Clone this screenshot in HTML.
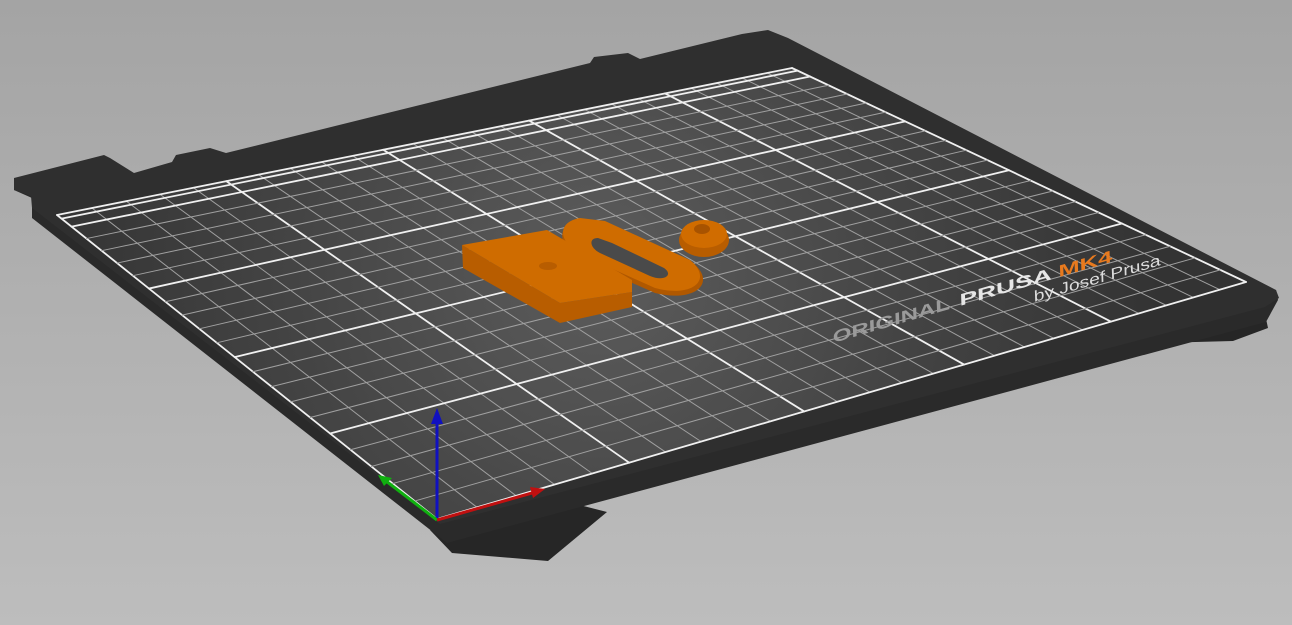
<!DOCTYPE html>
<html><head><meta charset="utf-8">
<style>
html,body{margin:0;padding:0;width:1292px;height:625px;overflow:hidden;}
body{background:linear-gradient(#a4a4a4,#bdbdbd);}
svg{display:block;}
</style></head><body>
<svg id="s" width="1292" height="625" viewBox="0 0 1292 625" xmlns="http://www.w3.org/2000/svg">
<defs>
<radialGradient id="glow" cx="600" cy="270" r="560" gradientUnits="userSpaceOnUse">
<stop offset="0" stop-color="#5c5c5c"/><stop offset="0.55" stop-color="#444"/><stop offset="1" stop-color="#333"/>
</radialGradient>
</defs>
<polygon points="430,530 452,553 548,561 607,512 560,500" fill="#262626"/>
<polygon points="1140,330 1158,343 1233,341 1268,328 1262,300" fill="#262626"/>
<polygon points="14,178 14,190 32,198 32,218 447,543 1266,322 1278,300 1276,290" fill="#2a2a2a"/>
<polygon points="14,178 104,155 110,158 134,173 172,162 176,155 210,148 226,153 590,63 594,57 628,53 640,59 742,34 768,30 788,38 1276,290 1279,298 1265,307 440,524 32,208 31,196 14,190" fill="#2f2f2f"/>
<polygon id="pa" points="437,519 1246,282 792,68 57,215" fill="url(#glow)"/>
<g id="grid" stroke-linecap="round"></g>
<g transform="matrix(0.96,-0.28,0.02,0.55,833,343)">
<text x="0" y="0" font-family="Liberation Sans, sans-serif" font-weight="bold" font-size="30" fill="#9a9a9a" textLength="122" lengthAdjust="spacingAndGlyphs">ORIGINAL</text>
<text x="132" y="0" font-family="Liberation Sans, sans-serif" font-weight="bold" font-size="30" fill="#e6e6e6" textLength="96" lengthAdjust="spacingAndGlyphs">PRUSA</text>
<text x="235" y="0" font-family="Liberation Sans, sans-serif" font-weight="bold" font-size="30" fill="#e87a1e" textLength="56" lengthAdjust="spacingAndGlyphs">MK4</text>
</g>
<g transform="matrix(0.96,-0.28,0.02,0.55,1034,302)">
<text x="0" y="0" font-family="Liberation Sans, sans-serif" font-size="28" fill="#dcdcdc" textLength="132" lengthAdjust="spacingAndGlyphs">by Josef Prusa</text>
</g>
<g>
<path d="M580,220 C555,224 556,248 585,262 L655,293 C695,303 718,283 692,262 L605,224 Z" fill="#b05800"/>
<path d="M580,218 C556,222 557,244 586,257 L655,288 C692,298 714,280 690,260 L605,221 Z" fill="#cf6c00"/>
<path d="M598,238 C588,238 590,248 600,253 L650,276 C664,282 674,275 664,268 L612,243 Z" fill="#4a4a4a"/>
<polygon points="462,245 463,268 560,323 632,307 632,292 560,303" fill="#b85d00"/>
<polygon points="462,245 547,230 632,280 632,292 560,303" fill="#cf6c00"/>
<ellipse cx="548" cy="266" rx="9" ry="4" fill="#b85d00"/>
<ellipse cx="704" cy="240" rx="25" ry="17" fill="#b85d00"/>
<ellipse cx="704" cy="234" rx="23" ry="14" fill="#d06c00"/>
<ellipse cx="702" cy="229" rx="8" ry="5" fill="#a85300"/>
</g>
<line x1="437" y1="520" x2="437" y2="422" stroke="#1010c0" stroke-width="3"/>
<polygon points="431,424 443,424 437,408" fill="#1010c0"/>
<line x1="437" y1="520" x2="386" y2="481" stroke="#10b010" stroke-width="3"/>
<polygon points="378,475 392,478 384,486" fill="#10b010"/>
<line x1="437" y1="520" x2="532" y2="493" stroke="#c01010" stroke-width="3"/>
<polygon points="545,489 530,487 533,498" fill="#c01010"/>
</svg>
<script>
(function(){
var P=[[437,519],[1246,282],[792,68],[57,215]];
var x0=P[0][0],y0=P[0][1],x1=P[1][0],y1=P[1][1],x2=P[2][0],y2=P[2][1],x3=P[3][0],y3=P[3][1];
var dx1=x1-x2,dx2=x3-x2,dx3=x0-x1+x2-x3,dy1=y1-y2,dy2=y3-y2,dy3=y0-y1+y2-y3;
var den=dx1*dy2-dx2*dy1;
var g=(dx3*dy2-dx2*dy3)/den,h=(dx1*dy3-dx3*dy1)/den;
var a=x1-x0+g*x1,b=x3-x0+h*x3,c=x0,d=y1-y0+g*y1,e=y3-y0+h*y3,f=y0;
function m(u,v){var w=g*u+h*v+1;return [(a*u+b*v+c)/w,(d*u+e*v+f)/w];}
var G=document.getElementById('grid'),ns='http://www.w3.org/2000/svg';
function L(p,q,major){var l=document.createElementNS(ns,'line');l.setAttribute('x1',p[0]);l.setAttribute('y1',p[1]);l.setAttribute('x2',q[0]);l.setAttribute('y2',q[1]);l.setAttribute('stroke',major?'#f0f0f0':'#a0a0a0');l.setAttribute('stroke-width',major?1.8:1);G.appendChild(l);}
var NX=25,NY=21;
for(var i=0;i<=NX;i++){var u=i/NX;L(m(u,0),m(u,1),i%5==0||i==NX);}
for(var j=0;j<=NY;j++){var v=j/NY;L(m(0,v),m(1,v),j%5==0||j==NY);}
L(m(0,0.985),m(1,0.985),true);
})();
</script>
</body></html>
